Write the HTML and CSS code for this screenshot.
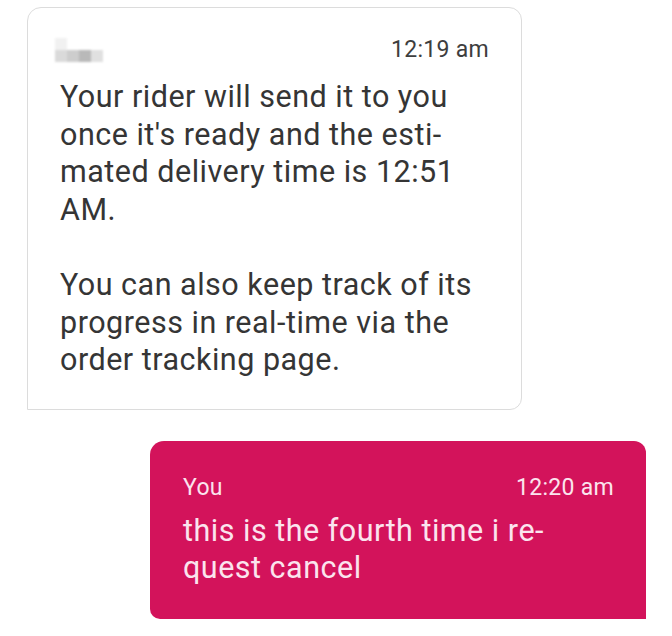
FILE: index.html
```
<!DOCTYPE html>
<html lang="en">
<head>
<meta charset="utf-8">
<link rel="stylesheet" href="styles.css">
</head>
<body>
<div class="chat">
  <div class="msg in">
    <div class="head">
      <span class="name"><i class="px p1"></i><i class="px p2"></i><i class="px p3"></i><i class="px p4"></i></span>
      <span class="time">12:19 am</span>
    </div>
    <p class="text">Your rider will send it to you<br>once it's ready and the esti-<br>mated delivery time is 12:51<br>AM.</p>
    <p class="text">You can also keep track of its<br>progress in real-time via the<br>order tracking page.</p>
  </div>
  <div class="msg out">
    <div class="head">
      <span class="who">You</span>
      <span class="time">12:20 am</span>
    </div>
    <p class="text">this is the fourth time i re-<br>quest cancel</p>
  </div>
</div>
</body>
</html>
```
FILE: styles.css
```
html, body {
  margin: 0;
  padding: 0;
  background: #ffffff;
}
body {
  font-family: Roboto, "Liberation Sans", sans-serif;
  color: #353535;
}
.chat {
  display: flex;
  flex-direction: column;
  padding: 7px 26px 0 27px;
  gap: 31px;
}
.msg {
  box-sizing: border-box;
}
.msg.in {
  width: 495px;
  border: 1px solid #dcdcdc;
  border-radius: 14px 13px 12px 0;
  padding: 28px 32px 30px 32px;
}
.msg.out {
  align-self: flex-end;
  width: 496px;
  background: #d3135b;
  color: #fbe4ee;
  border-radius: 14px 12px 0 10px;
  padding: 33px 32px 32px 33px;
}
.head {
  display: flex;
  justify-content: space-between;
  align-items: center;
  font-size: 23px;
  letter-spacing: 0.3px;
  line-height: 28px;
}
.msg.in .head {
  margin-bottom: 14px;
}
.msg.out .head {
  margin-bottom: 10px;
}
.time {
  color: #3e3e3e;
}
.msg.out .time, .who {
  color: #fbe4ee;
}
.name {
  display: flex;
  align-items: flex-end;
  height: 28px;
  margin-left: -5px;
  padding-bottom: 2px;
  box-sizing: border-box;
  filter: blur(0.8px);
}
.px {
  display: block;
  width: 12px;
  height: 12px;
  background: #dadada;
}
.p1 { box-shadow: 0 -12px 0 #f1f1f1; }
.p2 { background: #cdcdcd; }
.p3 { background: #b9b9b9; }
.p4 { background: #e0e0e0; }
.text {
  margin: 0;
  font-size: 30.5px;
  letter-spacing: 0.5px;
  line-height: 37.6px;
}
.text + .text {
  margin-top: 37.6px;
}
```
